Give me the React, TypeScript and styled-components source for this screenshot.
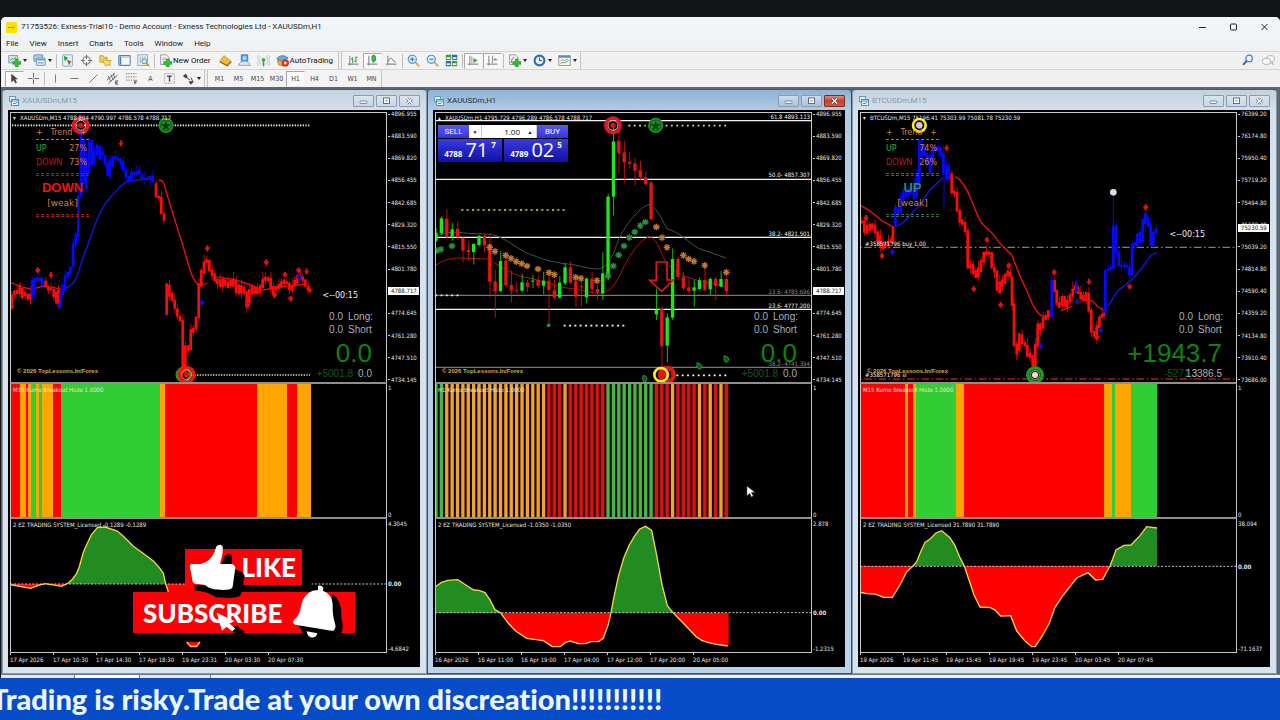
import React from 'react';
import styled, { createGlobalStyle, css } from 'styled-components';

const GlobalStyle = createGlobalStyle`
  *, *::before, *::after { box-sizing: border-box; }
  html, body { margin: 0; padding: 0; background: #111315; }
  body { font-family: Roboto, 'Open Sans', sans-serif; color: #1c1c1c; overflow-x: hidden; }
  button, input { font: inherit; color: inherit; margin: 0; }
`;

const chartFont = `'DejaVu Sans Condensed', 'DejaVu Sans', sans-serif`;

/* ---------- application shell ---------- */

const Page = styled.div`
  min-height: 100vh;
  display: flex;
  flex-direction: column;
  padding-top: 17px;
  background: #111315;
`;

const AppWindow = styled.main`
  display: flex;
  flex-direction: column;
  margin-left: 1px;
  background: #f0f0f0;
  border-radius: 5px 5px 0 0;
  overflow: hidden;
`;

const TitleBar = styled.header`
  display: flex;
  align-items: center;
  height: 20px;
  padding: 0 9px 0 5px;
  background: #eff4f9;
`;

const AppLogo = styled.svg`
  width: 11px;
  height: 11px;
  margin-right: 4px;
`;

const AppTitle = styled.h1`
  flex: 1;
  margin: 0;
  font-size: 8px;
  line-height: 12px;
  font-weight: 400;
  white-space: nowrap;
`;

const Caption = styled.div`
  display: flex;
  gap: 19px;
`;

const CaptionButton = styled.button`
  width: 12px;
  height: 12px;
  padding: 0;
  border: 0;
  background: none;
  svg { display: block; width: 12px; height: 12px; }
`;

const MenuBar = styled.nav`
  display: flex;
  align-items: center;
  gap: 11px;
  height: 14px;
  padding-left: 5px;
  background: linear-gradient(#eff3f7, #f0f0f0);
`;

const MenuItem = styled.button`
  padding: 0;
  border: 0;
  background: none;
  font-size: 8px;
  line-height: 12px;
`;

const ToolRow = styled.div`
  display: flex;
  align-items: center;
  height: 18px;
  border-top: 1px solid #d4d4d4;
`;

const ToolGroup = styled.div`
  display: flex;
  align-items: center;
  height: 17px;
  padding-left: 4px;
  border-right: 1px solid #c4c4c4;
  background: #f3f3f3;
  & + & { border-left: 1px solid #c4c4c4; margin-left: 2px; padding-left: 2px; }
`;

const Tool = styled.button<{ $wide?: boolean; $on?: boolean }>`
  display: flex;
  align-items: center;
  width: ${p => (p.$wide ? 25 : 19)}px;
  height: 16px;
  padding: 0 0 0 2px;
  border: 1px solid transparent;
  background: none;
  font-family: ${chartFont};
  font-size: 7px;
  color: #444;
  ${p => p.$on && css`
    background: #f9f9f9;
    border-color: #a8a8a8 #f0f0f0 #f0f0f0 #a8a8a8;
  `}
  svg { display: block; width: 13px; height: 13px; flex: none; }
`;

const FrameTool = styled(Tool)`
  justify-content: center;
  padding: 0;
`;

const LabelTool = styled(Tool)`
  gap: 1px;
  width: auto;
  padding: 0 4px 0 2px;
  font-family: Roboto, sans-serif;
  font-size: 8px;
  color: #111;
  white-space: nowrap;
`;

const Caret = styled.span`
  width: 0;
  height: 0;
  margin-left: 2px;
  border: 2px solid transparent;
  border-top: 3px solid #222;
  border-bottom: 0;
`;

const Divider = styled.span`
  width: 1px;
  height: 14px;
  margin: 0 1px;
  background: #bdbdbd;
`;

const RightTools = styled.div`
  display: flex;
  gap: 2px;
  margin-left: auto;
  padding-right: 2px;
`;

/* ---------- chart windows ---------- */

const Workspace = styled.section`
  position: relative;
  display: grid;
  grid-template-columns: repeat(3, minmax(0, 1fr));
  padding: 2px 3px 0 1px;
  background: #5a6672;
`;

const ChartFrame = styled.article<{ $active?: boolean }>`
  display: flex;
  flex-direction: column;
  padding: 0 6px 6px 5px;
  border: 1px solid ${p => (p.$active ? '#33506c' : '#8796a5')};
  border-top-color: #4d5a66;
  border-radius: 4px 4px 0 0;
  background: ${p => (p.$active
    ? 'linear-gradient(#8fb2d6, #b4cde6 22px, #b9d3ea)'
    : 'linear-gradient(#c3d2e0, #d5e1ec 22px, #d7e3ef)')};
`;

const FrameHeader = styled.header`
  display: flex;
  align-items: center;
  height: 20px;
  padding: 2px 0 0 1px;
`;

const FrameTitle = styled.h2<{ $active?: boolean }>`
  flex: 1;
  margin: 0 0 0 3px;
  font-size: 8px;
  line-height: 12px;
  font-weight: 400;
  color: ${p => (p.$active ? '#1f3348' : '#8d99a5')};
`;

const FrameButtons = styled.div`
  display: flex;
  gap: 2px;
`;

const FrameButton = styled.button<{ $tone?: 'danger' | 'active' }>`
  width: 21px;
  height: 12px;
  padding: 0;
  border: 1px solid ${p => (p.$tone === 'danger' ? '#7e2c22' : '#8a9cae')};
  border-radius: 1px;
  background: ${p => (p.$tone === 'danger'
    ? 'linear-gradient(#dd8a7c, #c2402c 50%, #cf5a42)'
    : p.$tone === 'active'
      ? 'linear-gradient(#cbdcee, #a9c2dc)'
      : 'linear-gradient(#d9e5f0, #c9d8e7)')};
  svg { display: block; margin: 0 auto; width: 11px; height: 10px; }
`;

const Board = styled.div`
  display: grid;
  grid-template-columns: minmax(0, 1fr) 33px;
  padding-left: 2px;
  background: #000;
  color: #e6e6e6;
  font-family: ${chartFont};
  font-size: 6px;
  line-height: 8px;
  white-space: nowrap;
`;

const Pane = styled.div<{ $first?: boolean }>`
  position: relative;
  margin-top: ${p => (p.$first ? 2 : 0)}px;
  border: solid #c9c9c9;
  border-width: ${p => (p.$first ? '1px' : '0')} 1px 2px 1px;
  border-bottom-color: #8f8f8f;
  overflow: hidden;
`;

const LastPane = styled(Pane)`
  border-bottom: 1px solid #c9c9c9;
`;

const Plot = styled.svg<{ $h: number }>`
  display: block;
  width: 100%;
  height: ${p => p.$h}px;
`;

const PaneLabel = styled.div<{ $inset?: number; $low?: boolean }>`
  position: absolute;
  top: ${p => (p.$low ? 2 : 1)}px;
  left: ${p => p.$inset ?? 2}px;
`;

const Scale = styled.ul`
  display: flex;
  flex-direction: column;
  justify-content: space-between;
  margin: 0;
  padding: 0 0 0 1px;
  list-style: none;
`;

const Tick = styled.li`
  display: flex;
  align-items: center;
  &::before { content: ''; width: 2px; height: 1px; margin-right: 1px; background: #cfcfcf; }
`;

const MainScale = styled(Scale)`
  position: relative;
`;

const WaveScale = styled(MainScale)`
  padding-top: 1px;
`;

const LastPrice = styled.output<{ $top: number }>`
  position: absolute;
  left: 1px;
  top: ${p => p.$top}px;
  width: 31px;
  padding-left: 3px;
  background: #fff;
  color: #111;
`;

const ZeroMark = styled.span<{ $top: number }>`
  position: absolute;
  left: 1px;
  top: ${p => p.$top}px;
  font-weight: 700;
`;

const TimeAxis = styled.ol`
  display: flex;
  height: 14px;
  margin: 0;
  padding: 0;
  list-style: none;
`;

const TimeMark = styled.li`
  position: relative;
  width: 43px;
  padding-top: 3px;
  &::before { content: ''; position: absolute; top: 0; left: 0; width: 1px; height: 2px; background: #cfcfcf; }
`;

/* ---------- chart overlays ---------- */

const TrendBox = styled.div`
  position: absolute;
  top: 14px;
  left: 25px;
  width: 53px;
  font-family: 'DejaVu Sans', sans-serif;
  font-size: 8px;
  line-height: 11px;
  color: #cf8040;
`;

const TrendLine = styled.div<{ $tone?: string; $tall?: boolean }>`
  display: flex;
  justify-content: space-between;
  padding-right: 2px;
  line-height: ${p => (p.$tall ? 14 : 11)}px;
  color: ${p => p.$tone ?? '#cf8040'};
`;

const Percent = styled.span`
  color: #cf8040;
`;

const Rule = styled.div<{ $tone: string; $double?: boolean }>`
  height: ${p => (p.$double ? 3 : 1)}px;
  margin: ${p => (p.$double ? '3px 0 4px' : '1px 0 2px')};
  border-top: 1px dashed ${p => p.$tone};
  border-bottom: ${p => (p.$double ? `1px dashed ${p.$tone}` : '0')};
`;

const Verdict = styled.div<{ $tone: string }>`
  font-family: 'Liberation Sans', Arial, sans-serif;
  font-size: 13px;
  line-height: 15px;
  font-weight: 700;
  text-align: center;
  color: ${p => p.$tone};
`;

const Strength = styled.div`
  text-align: center;
  font-size: 9px;
  line-height: 16px;
`;

const Countdown = styled.div<{ $top: number; $right: number }>`
  position: absolute;
  top: ${p => p.$top}px;
  right: ${p => p.$right}px;
  font-family: 'DejaVu Sans', sans-serif;
  font-size: 8px;
  line-height: 10px;
  color: #f0f0f0;
`;

const Results = styled.div`
  position: absolute;
  right: 14px;
  bottom: 2px;
  font-family: 'Liberation Sans', Arial, sans-serif;
  font-size: 10px;
  line-height: 13px;
  text-align: right;
  color: #a9b0bd;
`;

const ResultLine = styled.div`
  display: flex;
  justify-content: flex-end;
  gap: 5px;
`;

const Side = styled.span`
  width: 24px;
  text-align: left;
`;

const Profit = styled.div`
  margin-bottom: -3px;
  font-size: 26px;
  line-height: 34px;
  color: #128012;
`;

const Total = styled.span<{ $overlap?: boolean }>`
  color: #14591c;
  margin-right: ${p => (p.$overlap ? -17 : 0)}px;
`;

const Watermark = styled.div`
  position: absolute;
  left: 6px;
  bottom: 7px;
  font-family: 'Liberation Sans', Arial, sans-serif;
  font-size: 6px;
  font-weight: 700;
  color: #d2ac3a;
`;

const LevelLabel = styled.div<{ $top: number; $dim?: boolean }>`
  position: absolute;
  right: 1px;
  top: ${p => p.$top}px;
  color: ${p => (p.$dim ? '#8a8a8a' : '#f2f2f2')};
`;

const OrderLabel = styled.div<{ $top: number }>`
  position: absolute;
  left: 4px;
  top: ${p => p.$top}px;
  color: #f2f2f2;
`;

const TradePanel = styled.form`
  position: absolute;
  top: 12px;
  left: 2px;
  width: 130px;
  font-family: 'Open Sans', sans-serif;
  color: #fff;
`;

const TradeRow = styled.div`
  display: flex;
  height: 13px;
`;

const SideButton = styled.button`
  width: 31px;
  padding: 0;
  border: 0;
  background: linear-gradient(#5a5aee, #3434d8);
  font-family: Roboto, sans-serif;
  font-size: 8px;
  line-height: 13px;
`;

const StepButton = styled.button`
  width: 13px;
  padding: 0;
  border: 0;
  border-right: 1px solid #ccc;
  background: #fff;
  color: #111;
  font-size: 5px;
  line-height: 12px;
`;

const Volume = styled.input`
  width: 42px;
  height: 13px;
  padding: 0 4px 1px 0;
  border: 0;
  background: #fff;
  color: #111;
  font-size: 8px;
  text-align: right;
`;

const Quotes = styled.div`
  display: flex;
  gap: 2px;
  margin-top: 1px;
`;

const Quote = styled.button`
  display: flex;
  flex: 1;
  align-items: baseline;
  justify-content: center;
  gap: 3px;
  height: 23px;
  padding: 0;
  border: 0;
  background: linear-gradient(#3a3ae0, #1010a8);
  font-size: 8px;
  font-weight: 700;
  line-height: 22px;
`;

const BigDigits = styled.span`
  font-size: 20px;
  font-weight: 400;
`;

const Pip = styled.sup`
  align-self: flex-start;
  font-size: 8px;
  line-height: 12px;
`;

/* ---------- promo stickers and ticker ---------- */

const Promo = styled.aside`
  position: absolute;
  left: 129px;
  top: 453px;
  width: 230px;
  height: 112px;
  font-family: Lato, sans-serif;
  font-weight: 900;
  color: #fff;
`;

const LikeButton = styled.button`
  position: absolute;
  left: 55px;
  top: 9px;
  width: 117px;
  height: 36px;
  padding: 0 6px 0 0;
  border: 0;
  background: #fb0007;
  font-size: 26px;
  line-height: 36px;
  text-align: right;
  color: #fff;
`;

const SubscribeButton = styled.button`
  position: absolute;
  left: 3px;
  top: 52px;
  width: 222px;
  height: 41px;
  padding: 0 0 0 10px;
  border: 0;
  background: #fb0007;
  font-size: 26px;
  line-height: 38px;
  text-align: left;
  color: #fff;
`;

const PromoArt = styled.svg`
  position: absolute;
  inset: 0;
  width: 230px;
  height: 112px;
  pointer-events: none;
`;

const Pointer = styled.svg`
  position: absolute;
  left: 745px;
  top: 398px;
  width: 10px;
  height: 13px;
`;

const ChartTabs = styled.div`
  display: flex;
  height: 4px;
  background: #eef0f2;
  border-top: 1px solid #6f7780;
`;

const ChartTab = styled.span<{ $w: number; $on?: boolean }>`
  width: ${p => p.$w}px;
  border-right: 1px solid #777;
  background: ${p => (p.$on ? '#fff' : '#e3e6e8')};
`;

const Ticker = styled.footer`
  flex: 1;
  min-height: 41px;
  background: #064bc8;
  overflow: hidden;
`;

const TickerText = styled.p`
  margin: 0 0 0 -9px;
  font-family: Lato, sans-serif;
  font-size: 29px;
  font-weight: 900;
  font-variant-ligatures: none;
  line-height: 42px;
  white-space: nowrap;
  color: #eef6ff;
`;

/* ---------- chart data ---------- */

type Bar = [number, number, number];
type Run = { c: string; bars: Bar[] };

const BLUE = '#0808ff';
const RED = '#ff0a0a';

const goldM15: Run[] = [
  { c: RED, bars: [[35, 614, 652], [43, 602, 616], [51, 600, 612], [59, 584, 612], [67, 594, 624], [75, 606, 618], [83, 612, 628], [91, 610, 628]] },
  { c: BLUE, bars: [[96, 570, 622], [103, 566, 616], [111, 564, 574], [119, 562, 574], [127, 562, 588]] },
  { c: RED, bars: [[137, 572, 592], [145, 588, 602], [153, 594, 600], [161, 596, 622], [169, 606, 640], [175, 600, 640]] },
  { c: BLUE, bars: [[181, 612, 650], [188, 584, 615], [195, 556, 604], [203, 546, 562], [211, 528, 552], [219, 460, 530], [227, 432, 468], [235, 318, 440], [243, 128, 320], [251, 146, 282], [259, 200, 298], [267, 152, 250], [275, 150, 226], [283, 184, 220], [291, 164, 196], [299, 168, 208], [307, 184, 196], [315, 196, 224], [323, 216, 258], [330, 208, 260], [338, 200, 230], [346, 198, 208], [354, 204, 212], [362, 206, 224], [370, 214, 242], [378, 236, 264], [386, 258, 276], [394, 246, 274], [402, 244, 254], [410, 244, 256], [418, 240, 254], [426, 254, 266], [434, 262, 268], [442, 264, 270], [450, 258, 270], [458, 256, 276]] },
  { c: RED, bars: [[468, 280, 322], [476, 318, 324], [484, 320, 372], [492, 370, 392], [500, 580, 674], [508, 584, 620], [516, 608, 632], [524, 630, 656], [532, 656, 680], [540, 678, 694], [548, 690, 850], [556, 766, 850], [564, 766, 782], [572, 718, 780], [580, 714, 728], [588, 680, 718], [596, 580, 684], [604, 540, 590], [612, 514, 552], [620, 508, 518], [628, 510, 544], [636, 540, 558], [644, 550, 574], [652, 566, 582], [660, 568, 590], [668, 566, 592], [676, 570, 588], [684, 574, 594], [692, 570, 588], [700, 566, 590], [708, 570, 608], [716, 584, 612], [724, 586, 610], [732, 590, 612], [740, 604, 652], [748, 598, 640], [756, 588, 614], [764, 590, 612], [772, 594, 612], [780, 586, 610], [788, 566, 594], [796, 560, 572], [804, 562, 574], [812, 564, 596], [820, 588, 616], [828, 588, 602], [836, 582, 598], [844, 574, 592], [852, 568, 582], [860, 574, 582], [868, 578, 600], [876, 586, 604], [884, 570, 590], [892, 556, 580], [900, 554, 568], [908, 560, 572], [916, 568, 590], [924, 588, 602], [930, 596, 606]] },
];

const btcM15: Run[] = [
  { c: RED, bars: [[35, 392, 400], [43, 392, 428], [51, 404, 432], [59, 402, 422], [67, 400, 418], [75, 404, 430], [83, 424, 456], [91, 438, 466], [99, 456, 478], [107, 460, 470], [115, 452, 466], [123, 446, 458], [129, 410, 452]] },
  { c: BLUE, bars: [[136, 350, 408], [144, 352, 374], [152, 320, 368], [160, 302, 330], [168, 300, 322], [176, 296, 318], [184, 300, 312], [192, 284, 328], [200, 250, 320], [208, 150, 280], [216, 162, 200], [224, 170, 198], [232, 190, 222], [240, 196, 250], [248, 178, 216], [256, 166, 184], [264, 170, 184], [272, 172, 198], [280, 188, 254], [288, 222, 268], [296, 224, 270]] },
  { c: RED, bars: [[305, 250, 310], [313, 302, 314], [321, 306, 364], [329, 360, 398], [337, 388, 404], [345, 396, 426], [353, 420, 534], [361, 526, 536], [369, 522, 552], [377, 540, 564], [385, 532, 562], [393, 510, 546], [401, 486, 518], [409, 484, 494], [417, 486, 494], [425, 486, 534], [433, 532, 548], [441, 542, 602], [449, 574, 610], [457, 568, 592], [465, 552, 582], [473, 542, 560], [481, 546, 560], [486, 560, 648], [492, 640, 768], [500, 760, 794], [508, 730, 782], [516, 734, 762], [524, 756, 768], [532, 764, 800], [540, 788, 804], [548, 796, 828], [556, 762, 830], [563, 700, 770], [571, 700, 720], [579, 682, 716], [587, 676, 690], [595, 660, 682]] },
  { c: BLUE, bars: [[605, 570, 682]] },
  { c: RED, bars: [[614, 570, 606], [620, 600, 640], [628, 636, 654], [636, 618, 648], [644, 618, 650], [652, 630, 652], [660, 614, 636], [668, 596, 620], [676, 586, 600], [684, 590, 612], [692, 606, 628], [700, 614, 632], [708, 606, 632], [716, 608, 664], [724, 660, 728], [732, 722, 740], [740, 706, 746], [748, 680, 714], [756, 672, 684], [762, 668, 678]] },
  { c: BLUE, bars: [[680, 580, 604], [766, 540, 668], [774, 536, 540], [782, 530, 540], [790, 408, 536], [798, 408, 490], [806, 484, 528], [814, 524, 530], [822, 524, 530], [830, 526, 532], [838, 530, 556], [846, 462, 556], [854, 456, 466], [862, 430, 468], [870, 426, 458], [878, 386, 456], [886, 370, 402], [894, 384, 410], [902, 400, 468], [910, 426, 468], [918, 414, 430]] },
];

type Candle = [number, number, number, number, 0 | 1];
const goldH1: Candle[] = [
  [415, 428, 452, 456, 1], [380, 385, 430, 435, 1], [358, 386, 440, 445, 0], [398, 418, 440, 452, 1], [395, 416, 441, 450, 0],
  [440, 444, 482, 518, 0], [455, 480, 486, 512, 0], [460, 462, 486, 524, 1], [435, 438, 465, 470, 1], [432, 438, 466, 487, 0],
  [430, 462, 575, 622, 0], [540, 574, 605, 683, 0], [484, 513, 603, 606, 1], [500, 512, 586, 592, 0], [540, 585, 602, 637, 0],
  [575, 599, 602, 612, 0], [552, 577, 602, 606, 1], [570, 578, 590, 606, 0], [556, 572, 575, 594, 1], [556, 570, 588, 594, 0],
  [545, 572, 587, 612, 1], [555, 572, 600, 700, 0], [570, 601, 623, 628, 0], [558, 578, 623, 626, 1], [520, 532, 580, 585, 1],
  [515, 532, 578, 582, 0], [560, 574, 620, 650, 0], [565, 588, 592, 650, 0], [562, 566, 622, 640, 1], [545, 566, 597, 612, 0],
  [585, 597, 608, 628, 0], [487, 550, 610, 630, 1], [312, 320, 562, 570, 1], [110, 154, 320, 376, 1], [120, 152, 190, 250, 0],
  [152, 187, 217, 280, 0], [185, 216, 221, 236, 0], [205, 220, 242, 286, 0], [213, 240, 262, 272, 0], [245, 262, 283, 288, 0],
  [270, 278, 388, 392, 0], [596, 660, 673, 690, 1], [650, 657, 768, 855, 0], [670, 682, 767, 818, 1], [475, 507, 683, 690, 1],
  [500, 507, 561, 570, 0], [545, 560, 595, 600, 0], [565, 592, 603, 610, 0], [570, 592, 602, 650, 1], [562, 571, 597, 600, 1],
  [530, 570, 600, 605, 0], [562, 567, 598, 614, 1], [560, 567, 588, 630, 0], [543, 567, 590, 592, 1], [560, 567, 603, 614, 0],
];
const h1x = (i: number) => 33 + i * 16.13;
const kumoH1 = 'ggooooooooooooooooooorrrorrrrrrrgggggggggrrrorrrrororor';
const kumoFill: Record<string, string> = { g: '#43b843', o: '#f0a22c', r: '#d21414' };

type Band = [number, number, string];
const G = '#32cd32';
const O = '#ffa500';
const R = '#ff0000';
const goldBands: Band[] = [[31, 60, R], [60, 77, O], [77, 85, R], [85, 92, O], [92, 108, G], [108, 116, O], [116, 125, G], [125, 158, O], [158, 182, R], [182, 480, G], [480, 496, O], [496, 770, R], [770, 860, O], [860, 891, R], [891, 932, O]];
const btcBands: Band[] = [[31, 165, R], [165, 173, O], [173, 189, R], [189, 197, O], [197, 318, G], [318, 342, O], [342, 762, R], [762, 786, O], [786, 794, G], [794, 842, O], [842, 922, G]];

/* ---------- chart drawing ---------- */

const Runs = ({ runs }: { runs: Run[] }) => (
  <>
    {runs.map((run, r) => (
      <g key={r} fill={run.c}>
        {run.bars.map(([x, top, bottom], i) => (
          <React.Fragment key={x}>
            <rect x={x - 4} y={top} width={8} height={Math.max(bottom - top, 6)} />
            <rect x={x - 1} y={top - ((i * 7 + 5) % 11) * 2} width={3} height={bottom - top + ((i * 7 + 5) % 11) * 2 + ((i * 5) % 9) * 2} opacity={0.75} />
          </React.Fragment>
        ))}
      </g>
    ))}
  </>
);

const Diamond = ({ at, c = '#e01010', down }: { at: [number, number][]; c?: string; down?: boolean }) => (
  <g fill={c}>
    {at.map(([x, y]) => (
      <path key={`${x}-${y}`} d={down ? `M${x - 3} ${y - 10}h6v7h5l-8 13l-8 -13h5z` : `M${x - 3} ${y - 9}h6v5h4v5l-7 9l-7 -9v-5h4z`} />
    ))}
  </g>
);

const Target = ({ x, y, outer, inner, dot }: { x: number; y: number; outer: string; inner: string; dot: string }) => (
  <g>
    <circle cx={x} cy={y} r={22} fill="none" stroke={outer} strokeWidth={10} />
    <circle cx={x} cy={y} r={15} fill="none" stroke={inner} strokeWidth={3} />
    <circle cx={x} cy={y} r={8} fill={dot} />
  </g>
);

const StarSignal = ({ x, y }: { x: number; y: number }) => (
  <g>
    <circle cx={x} cy={y} r={23} fill="#1f8f2a" />
    <circle cx={x} cy={y} r={16} fill="none" stroke="#0b5212" strokeWidth={3} />
    <path d={`M${x} ${y - 14}l4 10l11 1l-9 7l3 11l-9 -6l-9 6l3 -11l-9 -7l11 -1z`} fill="#063d0b" />
  </g>
);

const Flower = ({ at, c }: { at: [number, number][]; c: string }) => (
  <g stroke={c} strokeWidth={4}>
    {at.map(([x, y]) => (
      <path key={`${x}-${y}`} d={`M${x - 10} ${y}h20M${x} ${y - 10}v20M${x - 7} ${y - 7}l14 14M${x - 7} ${y + 7}l14 -14`} />
    ))}
  </g>
);

const Dots = ({ x1, x2, y, c = '#e8f5e8', gap = 4, dash = 4 }: { x1: number; x2: number; y: number; c?: string; gap?: number; dash?: number }) => (
  <path d={`M${x1} ${y}H${x2}`} stroke={c} strokeWidth={5} strokeDasharray={`${dash} ${gap}`} />
);

const PriceSpace = ({ children }: { children: React.ReactNode }) => (
  <Plot $h={269} aria-hidden>
    <g transform="scale(0.33333) translate(-33 -69)" fill="none">{children}</g>
  </Plot>
);

const GoldM15Price = () => (
  <PriceSpace>
    <Dots x1={36} x2={930} y={106} />
    <Dots x1={575} x2={930} y={855} c="#f0d8b0" />
    <path d="M31 577L62 590L96 598L130 588L160 592L184 598" stroke="#e01010" strokeWidth={4} />
    <path d="M190 596C232 588 236 540 248 505C268 460 290 370 320 335C350 300 368 275 395 271L455 266" stroke="#1414f0" strokeWidth={4} />
    <path d="M476 270C494 270 494 290 500 310L540 440C554 480 562 520 576 556C592 590 598 592 622 579" stroke="#f01010" strokeWidth={4} />
    <path d="M640 560L700 568L745 582L790 600L850 590L920 582" stroke="#e01010" strokeWidth={4} />
    <Runs runs={goldM15} />
    <Diamond at={[[113, 541], [622, 475], [799, 517], [855, 554], [896, 541], [824, 615], [872, 626], [172, 632], [743, 646], [35, 650]]} />
    <Diamond down at={[[363, 161], [153, 556], [920, 545]]} />
    <Diamond c="#1010d0" at={[[178, 648], [606, 638], [897, 562]]} />
    <Target x={242} y={106} outer="#e8112d" inner="#e9c070" dot="#e01010" />
    <StarSignal x={498} y={106} />
    <circle cx={550} cy={854} r={20} stroke="#1f9a2a" strokeWidth={7} />
    <Target x={560} y={854} outer="#ee1515" inner="#e0b050" dot="#e01010" />
  </PriceSpace>
);

const GoldH1Price = () => (
  <PriceSpace>
    <g stroke="#f4f4f4" strokeWidth={4}>
      <path d="M0 92H3000M0 268H3000M0 442H3000M0 658H3000" />
    </g>
    <path d="M0 616H3000M0 832H3000" stroke="#777" strokeWidth={4} />
    <path d="M31 440C60 425 90 425 130 430L200 433C240 440 290 490 330 498C360 512 390 515 415 521C450 521 490 538 520 537C560 530 570 470 585 440C610 390 650 350 672 343C700 355 715 400 727 417C760 425 790 455 820 475L903 504" stroke="#3c5a3c" strokeWidth={3} />
    <path d="M31 527C60 505 90 502 130 505L185 507C220 520 240 545 290 560C340 567 380 585 420 593C460 595 490 610 530 610C570 600 580 560 597 530C620 485 650 445 675 440C700 450 710 500 725 520C760 560 810 570 850 578L903 590" stroke="#b01414" strokeWidth={3} />
    <Dots x1={109} x2={424} y={360} c="#e8e040" dash={6} gap={10} />
    <Dots x1={31} x2={100} y={616} dash={5} gap={11} />
    <Dots x1={416} x2={602} y={707} dash={6} gap={10} />
    <Dots x1={610} x2={662} y={107} c="#e8e040" dash={6} gap={10} />
    <Dots x1={722} x2={906} y={107} c="#bfe8bf" dash={5} gap={11} />
    <Dots x1={754} x2={906} y={856} dash={6} gap={10} />
    {goldH1.map(([hi, top, bottom, lo, up], i) => (
      <g key={i} fill={up ? '#1ee61e' : '#e81414'}>
        <rect x={h1x(i) - 1} y={hi} width={3} height={lo - hi} opacity={0.8} />
        <rect x={h1x(i) - 5} y={top} width={10} height={bottom - top} />
      </g>
    ))}
    <Flower c="#2f8f3c" at={[[36, 482], [48, 478], [81, 468], [549, 558], [565, 528], [581, 495], [597, 468], [613, 443], [629, 426], [646, 407], [661, 396]]} />
    <Flower c="#c07830" at={[[194, 472], [210, 484], [242, 496], [258, 505], [274, 515], [290, 521], [306, 528], [339, 537], [372, 548], [388, 554], [452, 562], [468, 565], [516, 572], [694, 411], [711, 443], [726, 472], [775, 496], [791, 507], [807, 514], [839, 526], [904, 547]]} />
    <circle cx={371} cy={706} r={6} fill="#1f8f2a" />
    <path d="M694 516H726V570H745L710 604L674 571H694Z" stroke="#e01818" strokeWidth={5} />
    <path d="M654 856q10 0 12 10q0 10 -8 10q-8 -4 -4 -20M816 818q12 2 14 10q0 10 -8 10q-9 -4 -6 -20M898 797q12 2 13 10q0 10 -8 10q-9 -4 -5 -20" fill="#0d5a16" stroke="#1f9a2a" strokeWidth={3} />
    <Target x={564} y={106} outer="#e8112d" inner="#e9c070" dot="#e01010" />
    <StarSignal x={692} y={106} />
    <Target x={726} y={854} outer="#ee1515" inner="#e05020" dot="#e01010" />
    <circle cx={708} cy={854} r={20} stroke="#ffee10" strokeWidth={8} />
    <circle cx={710} cy={854} r={11} fill="#f01010" />
  </PriceSpace>
);

const BtcPrice = () => (
  <PriceSpace>
    <path d="M0 472H3000" stroke="#6a8a6a" strokeWidth={4} strokeDasharray="22 8 5 8" />
    <path d="M0 867H3000" stroke="#b01c1c" strokeWidth={4} strokeDasharray="22 8 5 8" />
    <path d="M31 347C60 358 80 380 100 395L130 411" stroke="#f01010" strokeWidth={4} />
    <path d="M134 410C170 400 180 370 205 350L240 300L280 262" stroke="#1414f0" strokeWidth={4} />
    <path d="M315 260C350 275 365 340 390 392C405 415 430 425 445 455L485 495C500 530 515 575 530 600C545 640 560 675 582 680L600 675" stroke="#f01010" strokeWidth={4} />
    <path d="M632 662L668 648M700 632L726 632L745 652L760 660" stroke="#f01010" strokeWidth={4} />
    <path d="M772 650C785 640 790 605 820 590C850 565 870 545 885 520C900 500 905 492 921 487" stroke="#1414f0" strokeWidth={4} />
    <Runs runs={btcM15} />
    <path d="M282 260V356M790 310V420" stroke="#1010c0" strokeWidth={3} />
    <Diamond at={[[48, 384], [96, 498], [371, 597], [411, 450], [476, 527], [452, 645], [613, 547], [839, 590], [887, 352], [741, 742]]} />
    <Diamond down at={[[290, 175], [717, 576]]} />
    <Diamond c="#1010d0" at={[[127, 486], [572, 768], [752, 720], [682, 636]]} />
    <circle cx={208} cy={106} r={19} fill="#000" stroke="#fff01c" strokeWidth={8} />
    <circle cx={208} cy={106} r={10} fill="#c8c8d8" />
    <circle cx={790} cy={307} r={10} fill="#dcdce4" />
    <Target x={555} y={855} outer="#1f9a2a" inner="#1f9a2a" dot="#000" />
    <circle cx={555} cy={855} r={13} fill="#0a0a0a" stroke="#d8c850" strokeWidth={2} />
    <circle cx={555} cy={855} r={9} fill="#f0dce4" />
  </PriceSpace>
);

const BandPlot = ({ bands }: { bands: Band[] }) => (
  <Plot $h={133} aria-hidden shapeRendering="crispEdges">
    <g transform="scale(0.33333) translate(-33 0)">
      {bands.map(([a, b, c]) => <rect key={a} x={a} y={0} width={b - a} height={399} fill={c} />)}
    </g>
  </Plot>
);

const StripePlot = () => (
  <Plot $h={133} aria-hidden>
    <g transform="scale(0.33333) translate(-33 0)">
      {kumoH1.split('').map((k, i) => (
        <g key={i}>
          <rect x={h1x(i) - 8} y={0} width={16} height={399} fill={k === 'r' ? '#380404' : '#0c0500'} />
          <rect x={h1x(i) - 5} y={0} width={10} height={399} fill={kumoFill[k]} />
        </g>
      ))}
    </g>
  </Plot>
);

const WavePlot = ({ zero, line, ups, downs, tail }: { zero: number; line: string; ups: string; downs: string; tail?: React.ReactNode }) => (
  <Plot $h={133} aria-hidden>
    <g transform="scale(0.33333) translate(-33 -432)" fill="none">
      <path d={ups} fill="#228b22" />
      <path d={downs} fill="#ff0000" />
      <path d={`M31 ${zero}H3000`} stroke="#c8c8c8" strokeWidth={3} strokeDasharray="6 5" />
      <path d={line} stroke="#f5d83c" strokeWidth={4} />
      {tail}
    </g>
  </Plot>
);

const goldUp = 'L218 612L230 595L238 575L250 532L262 505L275 478L292 458L315 456L352 468L370 484L400 514L425 532L460 558L478 578L490 595L497 626';
const GoldWave = () => (
  <WavePlot
    zero={627}
    ups={`M200 627${goldUp}Z`}
    downs="M31 627L60 636L92 640L135 627ZM150 628L185 634L205 627ZM497 627L505 655H640V627ZM560 801L572 814H590L600 801Z"
    line={`M31 629L60 634L92 640L112 632L135 626L155 629L185 634L205 624${goldUp}L505 650`}
    tail={<path d="M560 801L572 814H590L600 801" stroke="#f5b83c" strokeWidth={5} />}
  />
);

const h1a = 'M31 635L50 622L68 616L98 614L118 627L146 645L162 646L180 653L194 673L210 704L227 714';
const h1b = 'L250 745L272 768L305 790L355 797L382 815L406 815L420 803L436 798L460 806L482 806L498 800L520 800L535 790L550 748L558 713';
const h1c = 'L566 670L580 605L596 550L612 512L628 484L644 462L662 454L680 466L694 535L711 628L727 692L744 713';
const h1d = 'L775 745L812 784L830 796L850 803L875 808L908 813';
const GoldH1Wave = () => (
  <WavePlot
    zero={713}
    ups={`${h1a}H31ZM558 713${h1c}Z`}
    downs={`M227 713${h1b}ZM744 713${h1d}H911V713Z`}
    line={`${h1a}${h1b}${h1c}${h1d}`}
  />
);

const b1 = 'M31 652L50 656L75 657L100 667L127 667L150 630L170 590L189 573';
const b2 = 'L200 560L212 530L225 502L240 492L258 474L275 467L300 488L315 512L330 548L343 573';
const b3 = 'L352 600L372 660L390 696L422 698L436 706L452 723L482 722L500 768L525 798L545 815L556 814L575 786L598 745L615 697L640 660L680 609L714 593L737 615L758 613L780 573';
const b4 = 'L788 552L798 525L822 511L843 510L870 482L890 455L921 459';
const BtcWave = () => (
  <WavePlot
    zero={574}
    ups={`M189 573${b2}ZM780 573${b4}V573Z`}
    downs={`${b1}H31ZM343 573${b3}Z`}
    line={`${b1}${b2}${b3}${b4}`}
  />
);

/* ---------- icons ---------- */

const Icon = ({ children }: { children: React.ReactNode }) => (
  <svg viewBox="0 0 16 16" fill="none" aria-hidden>{children}</svg>
);

const plus = <path d="M9 6h3.500v3.200H16v3.500h-3.500V16H9v-3.300H5.800V9.200H9z" fill="#2cc42c" stroke="#128012" strokeWidth=".6" />;
const axes = <path d="M3.500 2v12M1 12.500h13" stroke="#88918b" strokeWidth="1.400" />;

const icons = {
  newChart: <Icon><rect x="1" y="2" width="11" height="9" fill="#d4e8f4" stroke="#6a8ea6" /><path d="M3 8l2-3 2 2 3-4" stroke="#3a9a3a" />{plus}</Icon>,
  profiles: <Icon><rect x="1" y="1" width="11" height="8" rx="1" fill="#a8caec" stroke="#5c88b4" /><rect x="4" y="5" width="11" height="9" rx="1" fill="#dceaf6" stroke="#5c88b4" /><path d="M4 7h11" stroke="#5c9ad4" strokeWidth="1.500" /><path d="M6 11h7" stroke="#5c88b4" /></Icon>,
  market: <Icon><rect x="2" y="1" width="12" height="14" rx="1" fill="#e4f4fa" stroke="#6aa0b4" /><path d="M4 3l4 2-3 3z" fill="#1fa01f" stroke="#1fa01f" /><path d="M8 8l4 1-2 4z" fill="#e04020" stroke="#e04020" /></Icon>,
  target: <Icon><circle cx="8" cy="8" r="4.500" stroke="#707070" strokeWidth="1.300" /><path d="M8 1v5M8 10v5M1 8h5M10 8h5" stroke="#707070" strokeWidth="1.300" /></Icon>,
  navigator: <Icon><path d="M1 2h4l1 2h4v6H1z" fill="#f6d050" stroke="#b98a18" strokeWidth=".8" /><path d="M6 7l2-2 1.500 3H15l-2 3 1 3-3-1-3 2-1-3-2-2z" fill="#ffe04a" stroke="#b98a18" strokeWidth=".8" /></Icon>,
  terminal: <Icon><rect x="1" y="2" width="14" height="12" rx="1" fill="#f4f9fd" stroke="#5486b0" strokeWidth="1.300" /><path d="M2 3h2v10H2z" fill="#3d7fb8" /><path d="M5 4h9" stroke="#9dbdd8" /></Icon>,
  tester: <Icon><rect x="1" y="1" width="12" height="13" fill="#eaf2f8" stroke="#7c9cb4" /><path d="M4 3v8M7 3v5M10 3v3" stroke="#7c9cb4" /><circle cx="9" cy="9" r="3" fill="#cfe6f6" stroke="#4b7fa8" /><path d="M11 11l4 4" stroke="#c99a3a" strokeWidth="2" /></Icon>,
  order: <Icon><path d="M2 1h7l3 3v9H2z" fill="#fafafa" stroke="#888" /><path d="M4 5h5M4 7h4" stroke="#999" />{plus}</Icon>,
  book: <Icon><path d="M1 9l5-7 9 7-5 5z" fill="#f0bc3c" stroke="#b07c18" strokeWidth=".8" /><path d="M1 9.500l9 5 5-5" stroke="#94641a" strokeWidth="1.500" /></Icon>,
  community: <Icon><path d="M4 1h8v8H4z" fill="#58a4e6" stroke="#2f78b8" /><path d="M6 3h4v4H6z" fill="#b8dcf8" /><path d="M1 14c0-3 3-5 7-5s7 2 7 5z" fill="#dce8f0" stroke="#7c9cb4" /></Icon>,
  signal: <Icon><path d="M4.500 3a7 7 0 000 10M11.500 3a7 7 0 010 10M2 1.500a10 10 0 000 13M14 1.500a10 10 0 010 13" stroke="#98b8bc" /><circle cx="8" cy="7" r="2.500" fill="#58b858" /><path d="M8 7v8" stroke="#2faa3a" strokeWidth="2" /></Icon>,
  auto: <Icon><path d="M1 6c3-5 10-5 14-1l-7 5z" fill="#6aa8d8" stroke="#3a78a8" /><path d="M2 8l7 1v6l-6-2z" fill="#f0b830" stroke="#b08018" /><circle cx="11.500" cy="11" r="4.500" fill="#e03020" /><path d="M10 9.500h3v3h-3z" fill="#fff" /></Icon>,
  bars: <Icon>{axes}<path d="M7 4v7M7 6H5M11 3v7M11 4h2M11 9H9" stroke="#3a9a4a" strokeWidth="1.300" /></Icon>,
  candles: <Icon>{axes}<path d="M9 1v10" stroke="#1a8a2a" /><rect x="7.500" y="2" width="4" height="7" rx="1" fill="#3fc84a" stroke="#1a7a2a" /></Icon>,
  lineChart: <Icon>{axes}<path d="M4 9c2-5 4-5 6-1l3 2" stroke="#5c7a64" strokeWidth="1.200" /></Icon>,
  zoomIn: <Icon><path d="M10 10l5 5" stroke="#d8b050" strokeWidth="2.500" /><circle cx="6.500" cy="6.500" r="5" fill="#d8effc" stroke="#4f94d0" strokeWidth="1.400" /><path d="M4 6.500h5M6.500 4v5" stroke="#2a70b0" strokeWidth="1.400" /></Icon>,
  zoomOut: <Icon><path d="M10 10l5 5" stroke="#d8b050" strokeWidth="2.500" /><circle cx="6.500" cy="6.500" r="5" fill="#d8effc" stroke="#4f94d0" strokeWidth="1.400" /><path d="M4 6.500h5" stroke="#2a70b0" strokeWidth="1.400" /></Icon>,
  tile: <Icon><path d="M1 1h6.500v6.500H1zM8.500 8.500H15V15H8.500z" fill="#3aa03a" /><path d="M8.500 1H15v6.500H8.500zM1 8.500h6.500V15H1z" fill="#2f68b0" /><path d="M2 4h4.500v2H2zM9.500 4H14v2H9.500zM2 11.500h4.500v2H2zM9.500 11.500H14v2H9.500z" fill="#f0f6e8" /></Icon>,
  scroll: <Icon>{axes}<path d="M6 3v8" stroke="#888" /><path d="M8 5l5 3-5 3z" fill="#2aa03a" /></Icon>,
  shift: <Icon>{axes}<path d="M8 2v9" stroke="#777" /><path d="M14 7h-4l2-2m-2 2l2 2" stroke="#b05050" /></Icon>,
  indicators: <Icon><path d="M2 1h7l3 3v9H2z" fill="#f6f6f6" stroke="#888" /><path d="M4 11c1-6 2-7 4-7" stroke="#555" />{plus}</Icon>,
  clock: <Icon><circle cx="8" cy="8" r="6" fill="#e4f1fb" stroke="#2f6ea8" strokeWidth="2.600" /><path d="M8 4.500V8h3" stroke="#2b5078" strokeWidth="1.200" /></Icon>,
  template: <Icon><rect x="1" y="2" width="14" height="12" fill="#f2f8fb" stroke="#6c8ca4" /><path d="M1 3.500h14" stroke="#5c8cb4" strokeWidth="2" /><path d="M3 8l3-1 2 1 4-2" stroke="#d07050" /><path d="M3 12l3-2 2 1 5-3" stroke="#3a9a3a" /></Icon>,
  cursor: <Icon><path d="M4 2v11l3-3 2 4 2-1-2-4h3.500z" fill="#444" /></Icon>,
  cross: <Icon><path d="M8 1v6M8 9v6M1 8h6M9 8h6" stroke="#666" strokeWidth="1.200" /></Icon>,
  vline: <Icon><path d="M8 3v10" stroke="#777" strokeWidth="1.200" /></Icon>,
  hline: <Icon><path d="M3 8h10" stroke="#777" strokeWidth="1.200" /></Icon>,
  trend: <Icon><path d="M3 13L13 3" stroke="#777" strokeWidth="1.200" /></Icon>,
  channel: <Icon><path d="M1 10L11 1M3 14L14 4M3 5l3 7M6 3l3 7M9 2l2 6" stroke="#555" /><path d="M15 11h-3v4h3M12 13h2" stroke="#333" /></Icon>,
  fibo: <Icon><path d="M1 2h13M1 6h13M1 10h13" stroke="#777" strokeDasharray="2 1" /><path d="M12 15v-4h3M12 13h2" stroke="#333" /></Icon>,
  shapes: <Icon><path d="M1 5l4-3 2 4-2 2z" fill="#444" /><path d="M6 7l4 3M9 12l5 0-3 3zM11 7l2 4" fill="#444" stroke="#444" strokeWidth="1.200" /></Icon>,
  textBox: <Icon><rect x="2" y="2" width="12" height="12" stroke="#999" strokeDasharray="2 1" /><path d="M5 5h6M8 5v7" stroke="#444" strokeWidth="1.600" /></Icon>,
  search: <Icon><circle cx="10" cy="5.500" r="4" stroke="#4c7fd0" strokeWidth="1.600" /><path d="M7 8.500L2.500 13.500" stroke="#3c5fa8" strokeWidth="2.400" /></Icon>,
  chat: <Icon><ellipse cx="10.500" cy="6" rx="5" ry="4" fill="#f8f8f8" stroke="#a0a0a0" /><path d="M12 9l2 4-4-3" fill="#f8f8f8" stroke="#a0a0a0" /><ellipse cx="5.500" cy="9" rx="5" ry="3.800" fill="#f8f8f8" stroke="#a0a0a0" /></Icon>,
};

const ChartIcon = styled.svg`
  width: 10px;
  height: 10px;
`;

/* ---------- chart window ---------- */

type FrameProps = {
  title: string;
  active?: boolean;
  header: string;
  prices: string[];
  last: string;
  lastTop: number;
  price: React.ReactNode;
  overlay: React.ReactNode;
  histoName: string;
  histo: React.ReactNode;
  waveName: string;
  wave: React.ReactNode;
  range: [string, string];
  zeroTop: number;
  times: string[];
};

const ChartWindow = (p: FrameProps) => (
  <ChartFrame $active={p.active}>
    <FrameHeader>
      <ChartIcon viewBox="0 0 10 10" fill="none" aria-hidden>
        <rect x=".5" y=".5" width="6" height="5" fill="#e4f2fa" stroke="#5a9cc4" />
        <rect x="2.500" y="3.500" width="7" height="6" fill="#f2fafd" stroke="#4a90bc" />
        <path d="M3 5h6M4 8l1-1 1 1 2-2" stroke="#4a90bc" />
      </ChartIcon>
      <FrameTitle $active={p.active}>{p.title}</FrameTitle>
      <FrameButtons>
        <FrameButton aria-label="Minimize" $tone={p.active ? 'active' : undefined}>
          <svg viewBox="0 0 11 10"><rect x="2" y="5" width="7" height="2.500" rx="1" fill="#fff" stroke="#5f6f80" strokeWidth=".8" /></svg>
        </FrameButton>
        <FrameButton aria-label="Maximize" $tone={p.active ? 'active' : undefined}>
          <svg viewBox="0 0 11 10"><rect x="2.500" y="2" width="6" height="5.500" fill="#fff" stroke="#5f6f80" /><path d="M4.500 4.700h2" stroke="#5f6f80" /></svg>
        </FrameButton>
        <FrameButton aria-label="Close" $tone={p.active ? 'danger' : undefined}>
          <svg viewBox="0 0 11 10"><path d="M3 2.500l5 5M8 2.500l-5 5" stroke={p.active ? '#7e2c22' : '#5f6f80'} strokeWidth="2.600" /><path d="M3 2.500l5 5M8 2.500l-5 5" stroke="#fff" strokeWidth="1.400" /></svg>
        </FrameButton>
      </FrameButtons>
    </FrameHeader>
    <Board>
      <Pane $first>
        {p.price}
        <PaneLabel $inset={9}>{p.header}</PaneLabel>
        <PaneLabel $inset={2}>{p.active ? '▴' : '▾'}</PaneLabel>
        {p.overlay}
      </Pane>
      <MainScale>
        {p.prices.map(v => <Tick key={v}>{v}</Tick>)}
        <LastPrice $top={p.lastTop}>{p.last}</LastPrice>
      </MainScale>
      <Pane>
        {p.histo}
        <PaneLabel $low>{p.histoName}</PaneLabel>
      </Pane>
      <Scale><li>1</li><li>0</li></Scale>
      <LastPane>
        {p.wave}
        <PaneLabel $low>{p.waveName}</PaneLabel>
      </LastPane>
      <WaveScale>
        <li>{p.range[0]}</li>
        <li>{p.range[1]}</li>
        <ZeroMark $top={p.zeroTop}>0.00</ZeroMark>
      </WaveScale>
      <TimeAxis>{p.times.map(t => <TimeMark key={t}>{t}</TimeMark>)}</TimeAxis>
    </Board>
  </ChartFrame>
);

const Trend = ({ up, down, verdict, tone }: { up: string; down: string; verdict: string; tone: string }) => (
  <TrendBox>
    <TrendLine><span>+</span><span>Trend</span><span>+</span></TrendLine>
    <Rule $tone="#b07840" />
    <TrendLine $tone="#22b83a" $tall>UP<Percent>{up}</Percent></TrendLine>
    <TrendLine $tone="#c01818" $tall>DOWN<Percent>{down}</Percent></TrendLine>
    <Rule $tone={tone} $double />
    <Verdict $tone={verdict === 'UP' ? '#2f8f68' : '#f01212'}>{verdict}</Verdict>
    <Strength>[weak]</Strength>
    <Rule $tone={tone} $double />
  </TrendBox>
);

const Summary = ({ profit, total, last, overlap }: { profit: string; total: string; last: string; overlap?: boolean }) => (
  <Results>
    <ResultLine>0.0<Side>Long:</Side></ResultLine>
    <ResultLine>0.0<Side>Short</Side></ResultLine>
    <Profit>{profit}</Profit>
    <ResultLine><Total $overlap={overlap}>{total}</Total>{last}</ResultLine>
  </Results>
);

const goldPrices = ['4896.955', '4883.590', '4869.820', '4856.455', '4842.685', '4829.320', '4815.550', '4801.780', '4788.010', '4774.645', '4761.280', '4747.510', '4734.145'];
const btcPrices = ['76399.20', '76174.80', '75950.40', '75719.20', '75494.80', '75270.40', '75039.20', '74814.80', '74590.40', '74359.20', '74134.80', '73910.40', '73686.00'];
const copyright = '© 2026 TopLessons.In/Forex';

const ToolIcon = ({ name, wide, on }: { name: keyof typeof icons; wide?: boolean; on?: boolean }) => (
  <Tool aria-label={name} $wide={wide} $on={on}>{icons[name]}{wide && <Caret />}</Tool>
);

export default function App() {
  return (
    <Page>
      <GlobalStyle />
      <AppWindow>
        <TitleBar>
          <AppLogo viewBox="0 0 11 11" aria-hidden><rect width="11" height="11" rx="1" fill="#ffde02" /><path d="M2 5.500h7" stroke="#8a7a10" strokeDasharray="1 .4" /></AppLogo>
          <AppTitle>71753526: Exness-Trial10 - Demo Account - Exness Technologies Ltd - XAUUSDm,H1</AppTitle>
          <Caption>
            <CaptionButton aria-label="Minimize"><svg viewBox="0 0 12 12"><path d="M2 6.500h7" stroke="#222" /></svg></CaptionButton>
            <CaptionButton aria-label="Maximize"><svg viewBox="0 0 12 12"><rect x="2.500" y="3" width="6" height="6" rx="1" fill="none" stroke="#222" /></svg></CaptionButton>
            <CaptionButton aria-label="Close"><svg viewBox="0 0 12 12"><path d="M2.500 3l6 6M8.500 3l-6 6" stroke="#222" /></svg></CaptionButton>
          </Caption>
        </TitleBar>
        <MenuBar>
          {['File', 'View', 'Insert', 'Charts', 'Tools', 'Window', 'Help'].map(m => <MenuItem key={m}>{m}</MenuItem>)}
        </MenuBar>
        <ToolRow>
          <ToolGroup>
            <ToolIcon name="newChart" wide />
            <ToolIcon name="profiles" wide />
            <Divider />
            <ToolIcon name="market" />
            <ToolIcon name="target" />
            <ToolIcon name="navigator" />
            <ToolIcon name="terminal" />
            <ToolIcon name="tester" />
            <Divider />
            <LabelTool>{icons.order}New Order</LabelTool>
            <ToolIcon name="book" />
            <ToolIcon name="community" />
            <ToolIcon name="signal" />
            <LabelTool>{icons.auto}AutoTrading</LabelTool>
          </ToolGroup>
          <ToolGroup>
            <ToolIcon name="bars" />
            <ToolIcon name="candles" on />
            <ToolIcon name="lineChart" />
            <Divider />
            <ToolIcon name="zoomIn" />
            <ToolIcon name="zoomOut" />
            <ToolIcon name="tile" />
            <Divider />
            <ToolIcon name="scroll" on />
            <ToolIcon name="shift" on />
            <Divider />
            <ToolIcon name="indicators" wide />
            <ToolIcon name="clock" wide />
            <ToolIcon name="template" wide />
          </ToolGroup>
          <RightTools>
            <ToolIcon name="search" />
            <ToolIcon name="chat" />
          </RightTools>
        </ToolRow>
        <ToolRow>
          <ToolGroup>
            <ToolIcon name="cursor" on />
            <ToolIcon name="cross" />
            <Divider />
            <ToolIcon name="vline" />
            <ToolIcon name="hline" />
            <ToolIcon name="trend" />
            <ToolIcon name="channel" />
            <ToolIcon name="fibo" />
            <FrameTool aria-label="Text">A</FrameTool>
            <ToolIcon name="textBox" />
            <ToolIcon name="shapes" wide />
          </ToolGroup>
          <ToolGroup>
            {['M1', 'M5', 'M15', 'M30', 'H1', 'H4', 'D1', 'W1', 'MN'].map(t => <FrameTool key={t} $on={t === 'H1'}>{t}</FrameTool>)}
          </ToolGroup>
        </ToolRow>
        <Workspace>
          <ChartWindow
            title="XAUUSDm,M15"
            header="XAUUSDm,M15  4788.804 4790.997 4786.578 4788.717"
            prices={goldPrices}
            last="4788.717"
            lastTop={177}
            price={<GoldM15Price />}
            overlay={<>
              <Trend up="27%" down="73%" verdict="DOWN" tone="#a02020" />
              <Countdown $top={178} $right={28}>&lt;--00:15</Countdown>
              <Summary profit="0.0" total="+5001.8" last="0.0" />
              <Watermark>{copyright}</Watermark>
            </>}
            histoName="M15 Kumo Breakout Histo 1.0000"
            histo={<BandPlot bands={goldBands} />}
            waveName="2 EZ TRADING SYSTEM_Licensed -0.1289 -0.1289"
            wave={<GoldWave />}
            range={['4.3045', '-4.6842']}
            zeroTop={61}
            times={['17 Apr 2026', '17 Apr 10:30', '17 Apr 14:30', '17 Apr 18:30', '19 Apr 23:31', '20 Apr 03:30', '20 Apr 07:30']}
          />
          <ChartWindow
            active
            title="XAUUSDm,H1"
            header="XAUUSDm,H1  4795.729 4796.289 4786.578 4788.717"
            prices={goldPrices}
            last="4788.717"
            lastTop={177}
            price={<GoldH1Price />}
            overlay={<>
              <TradePanel onSubmit={e => e.preventDefault()}>
                <TradeRow>
                  <SideButton type="button">SELL</SideButton>
                  <StepButton type="button" aria-label="Decrease volume">▼</StepButton>
                  <Volume aria-label="Volume" defaultValue="1.00" />
                  <StepButton type="button" aria-label="Increase volume">▲</StepButton>
                  <SideButton type="button">BUY</SideButton>
                </TradeRow>
                <Quotes>
                  <Quote type="button">4788<BigDigits>71</BigDigits><Pip>7</Pip></Quote>
                  <Quote type="button">4789<BigDigits>02</BigDigits><Pip>5</Pip></Quote>
                </Quotes>
              </TradePanel>
              <LevelLabel $top={0}>61.8 4893.113</LevelLabel>
              <LevelLabel $top={58}>50.0- 4857.307</LevelLabel>
              <LevelLabel $top={117}>38.2- 4821.501</LevelLabel>
              <LevelLabel $top={175} $dim>23.6- 4785.696</LevelLabel>
              <LevelLabel $top={189}>23.6- 4777.200</LevelLabel>
              <LevelLabel $top={247} $dim>38.2- 4741.394</LevelLabel>
              <Summary profit="0.0" total="+5001.8" last="0.0" />
              <Watermark>{copyright}</Watermark>
            </>}
            histoName="H1 Kumo Breakout Histo 1.0000"
            histo={<StripePlot />}
            waveName="2 EZ TRADING SYSTEM_Licensed -1.0350 -1.0350"
            wave={<GoldH1Wave />}
            range={['2.878', '-1.2315']}
            zeroTop={90}
            times={['16 Apr 2026', '16 Apr 11:00', '16 Apr 19:00', '17 Apr 04:00', '17 Apr 12:00', '17 Apr 20:00', '20 Apr 05:00']}
          />
          <ChartWindow
            title="BTCUSDm,M15"
            header="BTCUSDm,M15  75196.41 75303.99 75081.78 75230.59"
            prices={btcPrices}
            last="75230.59"
            lastTop={114}
            price={<BtcPrice />}
            overlay={<>
              <Trend up="74%" down="26%" verdict="UP" tone="#3a6a4a" />
              <Countdown $top={117} $right={31}>&lt;--00:15</Countdown>
              <Summary profit="+1943.7" total="-5271.3" last="13386.5" overlap />
              <OrderLabel $top={127}>#358571796 buy 1.00</OrderLabel>
              <OrderLabel $top={258}>#358571796 sl</OrderLabel>
              <Watermark>{copyright}</Watermark>
            </>}
            histoName="M15 Kumo Breakout Histo 1.0000"
            histo={<BandPlot bands={btcBands} />}
            waveName="2 EZ TRADING SYSTEM_Licensed 31.7890 31.7890"
            wave={<BtcWave />}
            range={['38.094', '-71.1637']}
            zeroTop={44}
            times={['19 Apr 2026', '19 Apr 11:45', '19 Apr 15:45', '19 Apr 19:45', '19 Apr 23:45', '20 Apr 03:45', '20 Apr 07:45']}
          />
          <Promo>
            <LikeButton>LIKE</LikeButton>
            <SubscribeButton>SUBSCRIBE</SubscribeButton>
            <PromoArt viewBox="0 0 690 336" aria-hidden>
              <path d="M516 28H545V155H516z" fill="#000" />
              <path d="M192 135H205C235 132 235 145 270 150C300 152 308 120 314 88C330 92 344 98 344 110C340 120 340 150 330 168C310 176 280 174 258 172C240 158 215 152 195 152Z" fill="#000" />
              <path d="M276 74C280 50 288 40 300 42C308 48 306 62 304 74Z" fill="#000" />
              <path d="M606 162C630 175 636 205 634 235C640 255 640 270 632 280H520L505 256L606 268Z" fill="#000" />
              <path d="M300 262L322 258L345 276L336 280H315Z" fill="#000" />
              <path d="M180 82C178 74 184 72 190 72H212C236 66 250 52 258 22C262 12 274 12 278 20C280 40 274 56 270 72H304C314 74 318 82 315 90L308 140C306 148 296 148 280 150C250 150 240 146 226 136C212 130 192 138 188 124Z" fill="#fff" />
              <path d="M564 138C570 134 578 138 580 144L579 152C600 160 610 178 608 205C608 225 612 240 616 254C618 266 612 274 604 272L496 254C486 250 488 244 494 238C514 222 510 200 518 182C526 164 542 150 564 150Z" fill="#fff" />
              <path d="M530 274L562 280C560 298 532 298 530 274Z" fill="#fff" />
              <path d="M260 218L314 244L298 250L316 266L306 274L290 260L276 272Z" fill="#fff" />
            </PromoArt>
          </Promo>
          <Pointer viewBox="0 0 11 14" aria-hidden><path d="M1 1v11l3-3 2 4 2-1-2-4h4z" fill="#fff" stroke="#222" strokeWidth=".5" /></Pointer>
        </Workspace>
        <ChartTabs aria-hidden><ChartTab $w={74} /><ChartTab $w={65} $on /><ChartTab $w={71} /></ChartTabs>
      </AppWindow>
      <Ticker><TickerText>Trading is risky.Trade at your own discreation!!!!!!!!!!!</TickerText></Ticker>
    </Page>
  );
}
